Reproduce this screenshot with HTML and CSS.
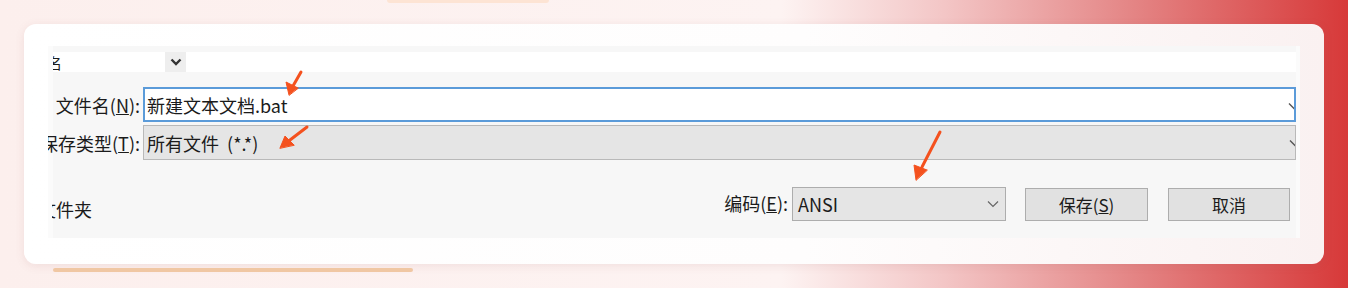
FILE: index.html
```html
<!DOCTYPE html>
<html lang="zh-CN">
<head>
    <meta charset="UTF-8">
    <meta name="viewport" content="width=device-width, initial-scale=1.0">
    <title>另存为</title>
    <link rel="stylesheet" href="styles.css">
</head>
<body>
    <div class="tab-pill"></div>

    <div class="card">
        <div class="dialog">
            <div class="row-top">
                <div class="clip-left col-name"><span>名</span></div>
                <div class="col-arrow">
                    <svg width="12" height="8" viewBox="0 0 12 8"><path d="M1.5 1.5 L6 6 L10.5 1.5" fill="none" stroke="#333" stroke-width="2.4"/></svg>
                </div>
                <div class="col-rest"></div>
            </div>

            <div class="row-field">
                <div class="clip-left label"><span>文件名(<u>N</u>):</span></div>
                <div class="field field-active">
                    <span>新建文本文档.bat</span>
                    <svg class="edge-chevron" width="12" height="8" viewBox="0 0 12 8"><path d="M1 1.5 L6 6.5 L11 1.5" fill="none" stroke="#555" stroke-width="1.4"/></svg>
                </div>
            </div>

            <div class="row-field row-type">
                <div class="clip-left label"><span>保存类型(<u>T</u>):</span></div>
                <div class="field field-combo">
                    <span>所有文件&nbsp;&nbsp;(*.*)</span>
                    <svg class="edge-chevron" width="12" height="8" viewBox="0 0 12 8"><path d="M1 1.5 L6 6.5 L11 1.5" fill="none" stroke="#555" stroke-width="1.4"/></svg>
                </div>
            </div>

            <div class="row-bottom">
                <div class="clip-left folder"><span>隐藏文件夹</span></div>
                <div class="spacer"></div>
                <div class="enc-label">编码(<u>E</u>):</div>
                <div class="enc-select">
                    <span>ANSI</span>
                    <svg width="12" height="8" viewBox="0 0 12 8"><path d="M1 1.5 L6 6.5 L11 1.5" fill="none" stroke="#666" stroke-width="1.2"/></svg>
                </div>
                <button class="btn btn-save">保存(<u>S</u>)</button>
                <button class="btn btn-cancel">取消</button>
            </div>
        </div>
    </div>

    <div class="under-line"></div>

    <!-- annotation arrows drawn over the screenshot -->
    <svg class="arrows" width="1348" height="288" viewBox="0 0 1348 288">
        <g fill="#f4511e" stroke="#f4511e" stroke-linecap="round">
            <line x1="301" y1="72" x2="293" y2="86" stroke-width="3"/>
            <polygon points="289,95 286,82 298,88" stroke-width="1"/>
            <line x1="307" y1="127" x2="290" y2="140" stroke-width="3"/>
            <polygon points="280,148 285,136 294,145" stroke-width="1"/>
            <line x1="940" y1="132" x2="922" y2="167" stroke-width="3"/>
            <polygon points="916,180 914,165 927,170" stroke-width="1"/>
        </g>
    </svg>
</body>
</html>
```

FILE: styles.css
```css
body {
    margin: 0;
    width: 1348px;
    height: 288px;
    overflow: hidden;
    position: relative;
    font-family: "Noto Sans CJK SC", "Noto Sans", sans-serif;
    color: #1b1b1b;
    background: linear-gradient(to right, #fcefed 0%, #fdf3f2 58%, #f3c6c6 70%, #e48585 84%, #d73939 100%);
}

.tab-pill {
    position: absolute;
    left: 387px;
    top: 0;
    width: 162px;
    height: 3px;
    background-color: #fde4d4;
    border-radius: 0 0 8px 8px;
}

.card {
    margin: 24px 24px 0 24px;
    height: 240px;
    box-sizing: border-box;
    padding: 22px 24px 26px 24px;
    border-radius: 12px;
    background: linear-gradient(to right, #ffffff 0%, #fefdfd 60%, #faf1f1 100%);
    box-shadow: 0 2px 10px rgba(160, 90, 90, 0.12);
}

.dialog {
    height: 100%;
    box-sizing: border-box;
    background-color: #f7f7f7;
    border-left: 5px solid #fbfbfb;
    border-right: 4px solid #fbfbfb;
    padding-top: 6px;
}

.clip-left {
    display: flex;
    justify-content: flex-end;
    overflow: hidden;
    white-space: nowrap;
    flex-shrink: 0;
}

/* top list header row */
.row-top {
    display: flex;
    height: 20px;
    font-size: 15px;
    line-height: 20px;
}

.col-name {
    width: 112px;
    background-color: #ffffff;
    justify-content: flex-start;
}

.col-name span {
    margin-left: -6px;
    margin-top: 1px;
}

.col-arrow {
    width: 21px;
    background-color: #eeeeee;
    display: flex;
    align-items: center;
    justify-content: center;
}

.col-rest {
    flex: 1;
    background-color: #ffffff;
}

/* file name / type rows */
.row-field {
    display: flex;
    align-items: center;
    margin-top: 15px;
    height: 35px;
    margin-left: -5px;
}

.row-type {
    margin-top: 3px;
}

.label {
    width: 92px;
    font-size: 18px;
    margin-right: 3px;
}

.field {
    flex: 1;
    height: 100%;
    box-sizing: border-box;
    display: flex;
    align-items: center;
    padding-left: 2px;
    font-size: 18px;
    position: relative;
    overflow: hidden;
}

.field-active {
    background-color: #ffffff;
    border: 2px solid #5b9bd9;
}

.field-combo {
    background-color: #e5e5e5;
    border: 1px solid #b9b9b9;
    padding-left: 3px;
}

.edge-chevron {
    position: absolute;
    right: -6px;
    top: 13px;
}

/* bottom row */
.row-bottom {
    display: flex;
    align-items: center;
    margin-top: 25px;
    height: 36px;
    margin-left: -5px;
    margin-right: 6px;
}

.folder {
    width: 40px;
    margin-left: 4px;
    font-size: 18px;
    margin-top: 12px;
}

.spacer {
    flex: 1;
}

.enc-label {
    font-size: 18px;
    margin-right: 4px;
}

.enc-select {
    width: 214px;
    height: 34px;
    box-sizing: border-box;
    background-color: #e5e5e5;
    border: 1px solid #adadad;
    display: flex;
    align-items: center;
    justify-content: space-between;
    padding: 0 6px 0 5px;
    font-size: 18px;
    margin-top: 2px;
}

.btn {
    height: 33px;
    box-sizing: border-box;
    background-color: #e1e1e1;
    border: 1px solid #adadad;
    font-family: inherit;
    font-size: 17px;
    color: #1b1b1b;
    padding: 0;
    margin-top: 3px;
}

.btn-save {
    width: 123px;
    margin-left: 19px;
}

.btn-cancel {
    width: 122px;
    margin-left: 20px;
}

.under-line {
    position: absolute;
    left: 53px;
    top: 268px;
    width: 360px;
    height: 4px;
    background-color: #f0c7a3;
    border-radius: 2px;
}

.arrows {
    position: absolute;
    left: 0;
    top: 0;
    pointer-events: none;
}
```
